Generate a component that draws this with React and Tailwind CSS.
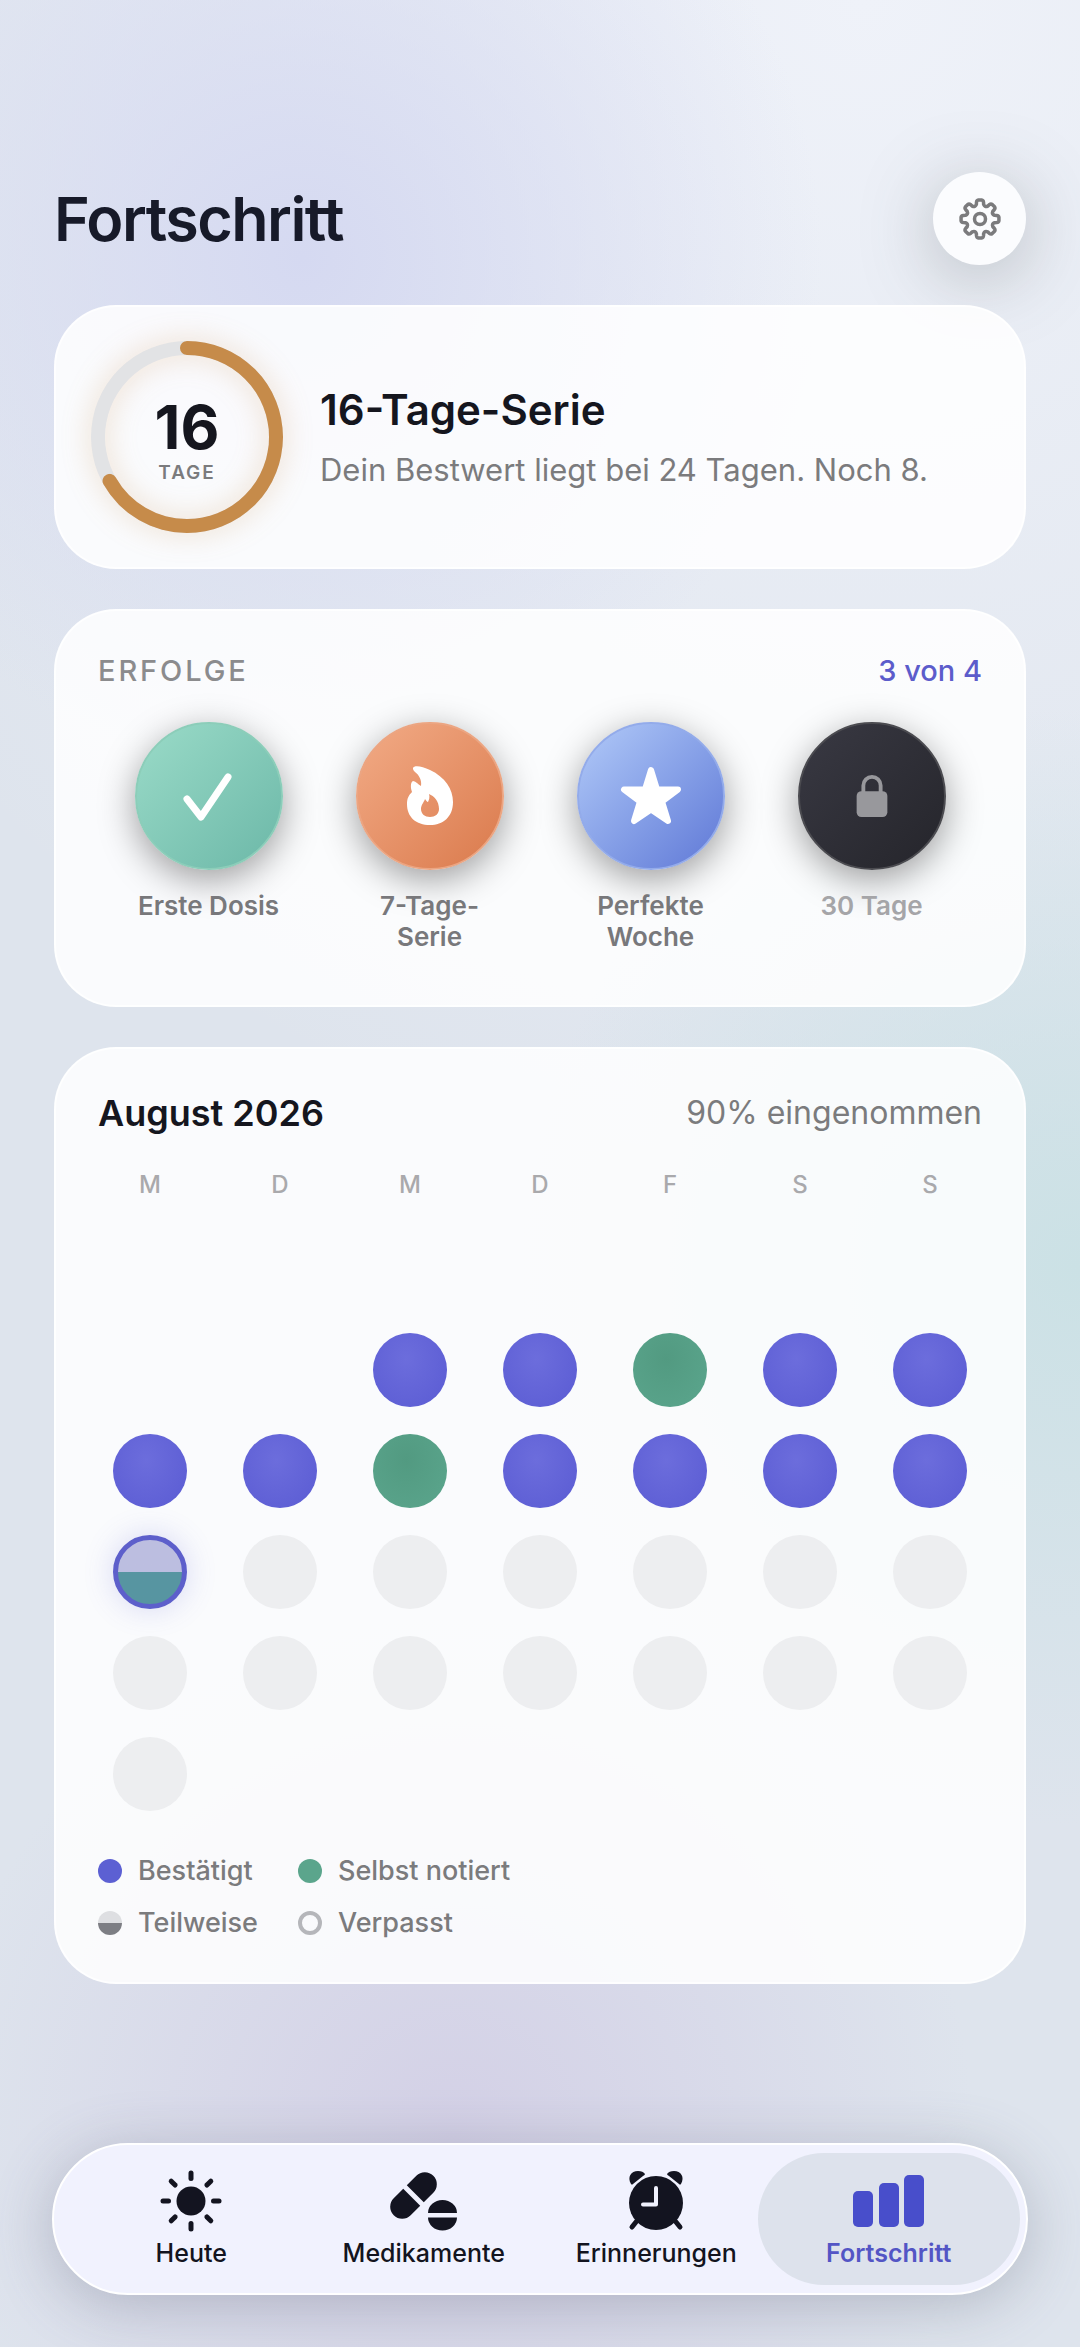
import { clsx } from 'clsx'

const badges = [
  { id: 'first', label: 'Erste Dosis', icon: CheckIcon, tone: 'border-[#8ccdb9] bg-linear-to-br from-[#9adbc8] to-[#6cb8a8]' },
  { id: 'week', label: '7-Tage-Serie', icon: FlameIcon, tone: 'border-[#eba582] bg-linear-to-br from-[#f2ab86] to-[#da7a4c]' },
  { id: 'perfect', label: 'Perfekte Woche', icon: StarIcon, tone: 'border-[#93abea] bg-linear-to-br from-[#b2caf8] to-[#6078d6]' },
  { id: 'month', label: '30 Tage', icon: LockIcon, locked: true, tone: 'border-[#4b4b50] bg-linear-to-br from-[#393943] to-[#25252b]' },
]

const weekdays = ['M', 'D', 'M', 'D', 'F', 'S', 'S']

// one letter per day: c = confirmed, s = self logged, p = partly, o = open, . = nothing
const weeks = ['.......', '..ccscc', 'ccscccc', 'poooooo', 'ooooooo', 'o......']

const dayStyles = {
  c: 'bg-radial-[at_45%_35%] from-[#6c6ddc] to-[#5a5bd3]',
  s: 'bg-radial-[at_45%_35%] from-[#529a81] to-[#5ba68d]',
  p: 'border-5 border-[#5d5fcb] bg-linear-to-b from-[#bcbee0] from-50% to-[#5795a1] to-50% shadow-[0_0_30px_rgba(93,95,211,0.22)]',
  o: 'bg-[#edeef0]',
}

const legend = [
  { label: 'Bestätigt', dot: 'bg-[#5c60d3]' },
  { label: 'Selbst notiert', dot: 'bg-[#5ba58c]' },
  { label: 'Teilweise', dot: 'bg-linear-to-b from-[#dedfe2] from-50% to-[#7d7e84] to-50%' },
  { label: 'Verpasst', dot: 'border-4 border-[#b5b6ba]' },
]

const tabs = [
  { label: 'Heute', icon: SunIcon },
  { label: 'Medikamente', icon: PillsIcon },
  { label: 'Erinnerungen', icon: AlarmIcon },
  { label: 'Fortschritt', icon: BarsIcon, active: true },
]

function CheckIcon() {
  return (
    <svg viewBox="0 0 60 60" className="size-15" fill="none" stroke="#fff" strokeWidth="7" strokeLinecap="round" strokeLinejoin="round">
      <path d="M8 33 L22 51 L49 11" />
    </svg>
  )
}

function FlameIcon() {
  return (
    <svg viewBox="0 0 60 64" className="h-16 w-15" fill="#fff" fillRule="evenodd">
      <path d="M13 4C14 1 22 2 30 6C45 13 53 25 53 38C53 53 43 61 30 61C16 61 7 53 7 40C7 34 9 31 12 28C10 22 11 18 13 17C15 17 18 20 21 22C22 16 19 11 15 8C13 6 13 5 13 4ZM29 30C30 33 29 36 28 38C27 38 26 36 25 35C24 38 21 41 21 45C21 50 25 53 30 53C35 53 39 50 39 45C39 37 34 32 29 30Z" />
    </svg>
  )
}

function StarIcon() {
  return (
    <svg viewBox="0 0 64 64" className="size-16" fill="#fff" stroke="#fff" strokeWidth="6" strokeLinejoin="round">
      <path d="M32 6L38 25.500H59L43 37.500L49 57L32 45.500L15 57L21 37.500L5 25.500H26Z" />
    </svg>
  )
}

function LockIcon() {
  return (
    <svg viewBox="0 0 40 50" className="h-12 w-10">
      <path d="M11 22V14a9 9 0 0 1 18 0v8" fill="none" stroke="#98989c" strokeWidth="4" />
      <rect x="4" y="20" width="32" height="27" rx="5" fill="#98989c" />
    </svg>
  )
}

function polar(r, deg) {
  const a = (deg * Math.PI) / 180
  return `${r * Math.sin(a)} ${-r * Math.cos(a)}`
}

const gearPath = [0, 45, 90, 135, 180, 225, 270, 315]
  .map((a, i) =>
    [
      `${i ? 'L' : 'M'}${polar(17, a - 12)}`,
      `Q${polar(19, a - 10)} ${polar(19, a - 5)}`,
      `L${polar(19, a + 5)}`,
      `Q${polar(19, a + 10)} ${polar(17, a + 12)}`,
      `L${polar(15, a + 14)}`,
      `Q${polar(12.5, a + 22.5)} ${polar(15, a + 31)}`,
    ].join('')
  )
  .join('')

function GearIcon() {
  return (
    <svg viewBox="-24 -24 48 48" className="size-12" fill="none" stroke="#7b7b7d" strokeWidth="3.500" strokeLinejoin="round">
      <path d={`${gearPath}Z`} />
      <circle r="5.500" />
    </svg>
  )
}

function SunIcon() {
  return (
    <svg viewBox="-32 -32 64 64" className="size-16" fill="#131420">
      <circle r="14.500" />
      {[0, 45, 90, 135, 180, 225, 270, 315].map((a) => (
        <rect key={a} x="-2.500" y="-30.500" width="5" height="10.500" rx="2.500" transform={`rotate(${a})`} />
      ))}
    </svg>
  )
}

function PillsIcon() {
  return (
    <svg viewBox="0 0 68 64" className="h-16 w-17" fill="#131420">
      <g transform="translate(23.500 26.500) rotate(45)">
        <path d="M-12 -2.500V-16a12 12 0 0 1 24 0V-2.500Z" />
        <path d="M-12 2.500V16a12 12 0 0 0 24 0V2.500Z" />
      </g>
      <path d="M38 44a14.500 13 0 0 1 29 0ZM38 48.500a14.500 13 0 0 0 29 0Z" />
    </svg>
  )
}

function AlarmIcon() {
  return (
    <svg viewBox="0 0 60 60" className="size-15" fill="#131420">
      <path d="M10 51L6 56M50 51L54 56" stroke="#131420" strokeWidth="5" strokeLinecap="round" />
      <circle cx="30" cy="32" r="27" />
      <path d="M5 13C1 6 5 0 12 0Q17 0 19 3Q19 4 17 5L7 13Q6 14 5 13ZM55 13C59 6 55 0 48 0Q43 0 41 3Q41 4 43 5L53 13Q54 14 55 13Z" />
      <path d="M30 17V33.500H17" fill="none" stroke="#f0f1fd" strokeWidth="4" strokeLinecap="round" strokeLinejoin="round" />
    </svg>
  )
}

function BarsIcon() {
  return (
    <svg viewBox="0 0 72 54" className="h-14 w-18" fill="#484ecb">
      <rect x="0" y="17" width="20" height="36" rx="5" />
      <rect x="26" y="9" width="20" height="44" rx="5" />
      <rect x="51" y="1" width="20" height="52" rx="5" />
    </svg>
  )
}

function Card({ className, children }) {
  return (
    <section className={clsx('rounded-[62px] border-2 border-white/80 bg-white/85', className)}>
      {children}
    </section>
  )
}

function StreakRing({ days, best }) {
  const length = 2 * Math.PI * 89
  return (
    <div className="grid size-48 shrink-0 place-items-center">
      <svg viewBox="0 0 192 192" className="col-start-1 row-start-1 size-48 -rotate-90 overflow-visible drop-shadow-[0_0_14px_rgba(200,140,70,0.3)]" fill="none" strokeWidth="14">
        <circle cx="96" cy="96" r="89" stroke="#e2e3e5" />
        <circle cx="96" cy="96" r="89" stroke="#c68b4a" strokeLinecap="round" strokeDasharray={`${(length * days) / best} ${length}`} />
      </svg>
      <div className="col-start-1 row-start-1 pt-2 text-center">
        <div className="text-[60px] leading-15 font-bold">{days}</div>
        <div className="mt-1 text-[19px] leading-6 font-semibold tracking-widest text-[#7b7b7d]">TAGE</div>
      </div>
    </div>
  )
}

export default function App() {
  return (
    <div className="flex min-h-screen flex-col bg-[#dee4ed] bg-[radial-gradient(circle_at_28%_11%,#d5d9f1_0,transparent_520px),radial-gradient(circle_at_100%_54%,#cbe1e5_0,transparent_560px),radial-gradient(circle_at_42%_91%,#d3d0e6_0,transparent_520px),radial-gradient(circle_at_80%_0%,#eff2f9_0,transparent_1200px)] px-[54px] pt-[172px] pb-[52px] font-[Inter,sans-serif] text-[#15161e]">
      <header className="flex items-center justify-between">
        <h1 className="text-[61px] leading-[72px] font-semibold tracking-tight text-[#171a29]">Fortschritt</h1>
        <button aria-label="Einstellungen" className="grid size-[93px] place-items-center rounded-full bg-[#fbfcfe] shadow-[0_12px_72px_rgba(80,85,85,0.34)]">
          <GearIcon />
        </button>
      </header>

      <main className="mt-10 flex flex-col gap-10">
        <Card className="flex items-center gap-[37px] px-[35px] py-[34px]">
          <StreakRing days={16} best={24} />
          <div>
            <h2 className="text-[42px] leading-[52px] font-semibold">16-Tage-Serie</h2>
            <p className="mt-3.5 text-[31px] leading-10 text-[#7b7b7d]">Dein Bestwert liegt bei 24 Tagen. Noch 8.</p>
          </div>
        </Card>

        <Card className="px-[42px] pt-10 pb-[53px]">
          <div className="flex items-center justify-between text-[29px] leading-10 font-medium">
            <h2 className="tracking-widest text-[#8b8b8d]">ERFOLGE</h2>
            <span className="text-[#5c5ccb]">3 von 4</span>
          </div>
          <ul className="mt-[31px] grid grid-cols-4">
            {badges.map(({ id, label, icon: Icon, locked, tone }) => (
              <li key={id} className="flex flex-col items-center gap-5">
                <div className={clsx('grid size-[148px] place-items-center rounded-full border-2 shadow-[0_10px_36px_rgba(0,0,0,0.38)]', tone)}>
                  <Icon />
                </div>
                <span className={clsx('max-w-[150px] text-center text-[26px] leading-[31px] font-semibold', locked ? 'text-[#a5a5a8]' : 'text-[#78787b]')}>
                  {label}
                </span>
              </li>
            ))}
          </ul>
        </Card>

        <Card className="px-[42px] pt-[39px] pb-[41px]">
          <div className="flex items-center justify-between">
            <h2 className="text-[36px] leading-[50px] font-semibold">August 2026</h2>
            <span className="text-[32px] leading-10 text-[#7b7b7d]">90% eingenommen</span>
          </div>
          <div className="mt-[31px] grid grid-cols-7 gap-x-[26px] text-center text-[24px] leading-8 font-medium text-[#a9a9ac]">
            {weekdays.map((day, i) => (
              <span key={i}>{day}</span>
            ))}
          </div>
          <div className="mt-[31px] grid grid-cols-7 justify-items-center gap-x-[26px] gap-y-[27px]">
            {weeks.join('').split('').map((day, i) => (
              <span key={i} className={clsx('size-[74px] rounded-full', dayStyles[day])} />
            ))}
          </div>
          <ul className="mt-[42px] grid w-fit grid-cols-[auto_auto] gap-x-10 gap-y-4 text-[27px] leading-9 font-medium text-[#7b7b7d]">
            {legend.map(({ label, dot }) => (
              <li key={label} className="flex items-center gap-4">
                <span className={clsx('size-6 rounded-full', dot)} />
                {label}
              </li>
            ))}
          </ul>
        </Card>
      </main>

      <nav className="-mx-0.5 mt-auto grid h-[152px] grid-cols-4 rounded-full border-2 border-white bg-[#f1f2fe] px-[21px] py-2 shadow-[0_10px_60px_rgba(90,95,115,0.32)]">
        {tabs.map(({ label, icon: Icon, active }) => (
          <a
            key={label}
            href="#"
            aria-current={active ? 'page' : undefined}
            className={clsx(
              '-mx-[15px] flex flex-col items-center gap-1 rounded-full pt-4 text-[25px] leading-8 font-medium',
              active ? 'bg-[#dde2ec] font-semibold text-[#5355c5]' : 'text-[#131420]'
            )}
          >
            <span className="grid h-16 place-items-center">
              <Icon />
            </span>
            {label}
          </a>
        ))}
      </nav>
    </div>
  )
}
